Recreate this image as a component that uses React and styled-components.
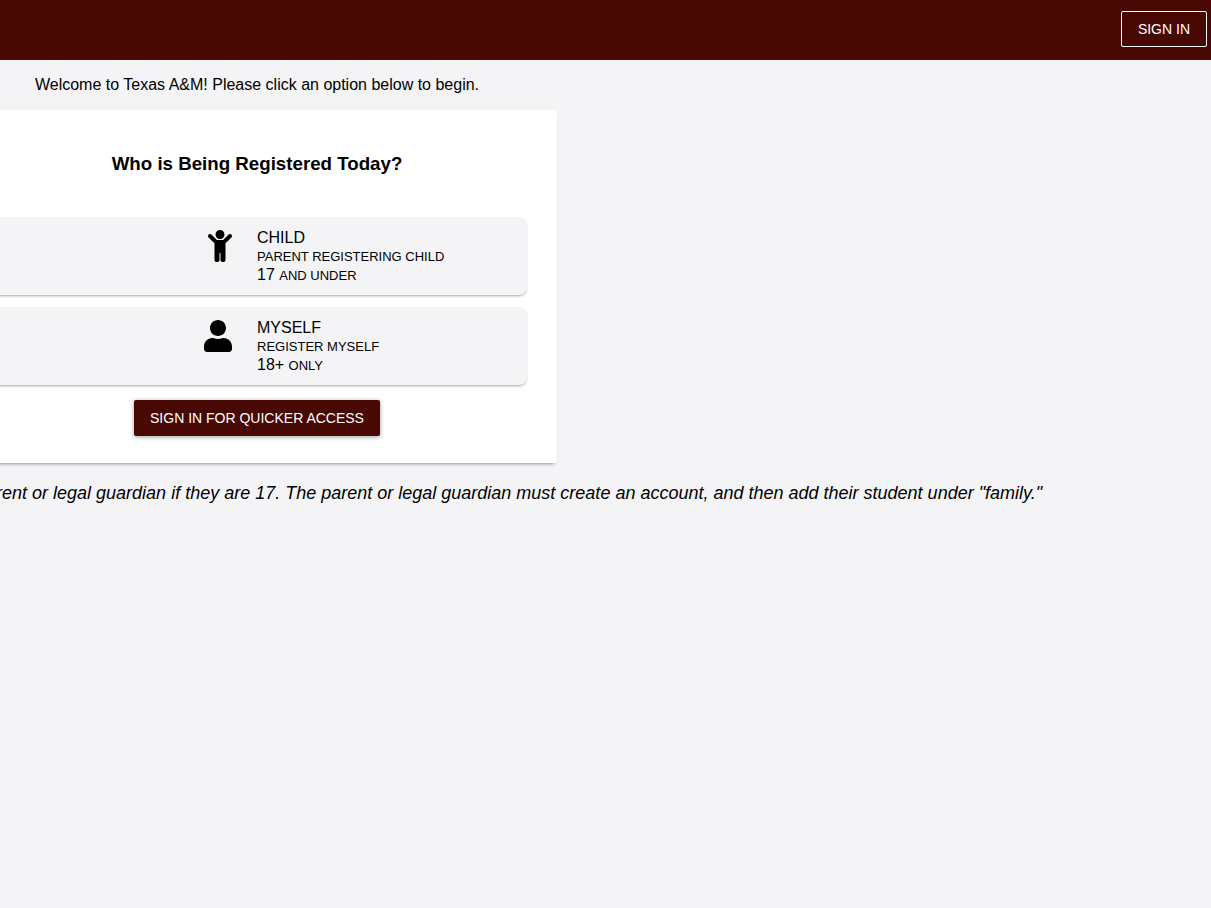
import React from "react";
import styled, { createGlobalStyle } from "styled-components";
import { FaChild, FaUser } from "react-icons/fa";

const maroon = "#480804";
const mist = "#f4f4f7";

const GlobalStyle = createGlobalStyle`
  * { box-sizing: border-box; }
  body {
    margin: 0;
    background: ${mist};
    color: #000;
    font-family: "Liberation Sans", Arial, sans-serif;
    font-size: 16px;
    line-height: 18px;
    overflow-x: hidden;
  }
`;

const Header = styled.header`
  display: flex;
  justify-content: flex-end;
  padding: 11px 4px 13px;
  background: ${maroon};
`;

const Button = styled.button`
  height: 36px;
  padding: 0 16px;
  border: ${(p) => (p.$outlined ? "1px solid #fff" : "0")};
  border-radius: 2px;
  background: ${maroon};
  color: #fff;
  font: inherit;
  font-size: 14px;
  text-transform: uppercase;
  cursor: pointer;
  box-shadow: ${(p) =>
    p.$outlined ? "none" : "0 1px 4px rgba(0, 0, 0, 0.4)"};
`;

const Main = styled.main`
  overflow: hidden;
`;

const Column = styled.div`
  width: 600px;
  margin-left: -43px;
  text-align: center;
`;

const Welcome = styled.p`
  margin: 0;
  padding: 16px 0;
`;

const Card = styled.section`
  padding: 43px 30px 27px;
  border-radius: 3px;
  background: #fff;
  box-shadow: 0 3px 4px -3px rgba(0, 0, 0, 0.6);
`;

const Title = styled.h3`
  margin: 0 0 42px;
  line-height: 22px;
`;

const Options = styled.div`
  display: grid;
  gap: 12px;
  margin-bottom: 15px;
`;

const Option = styled.button`
  display: grid;
  grid-template-columns: 1fr 1fr;
  align-items: start;
  width: 100%;
  height: 78px;
  padding: 12px 0;
  border: 0;
  border-radius: 8px;
  background: ${mist};
  color: inherit;
  font: inherit;
  text-align: left;
  cursor: pointer;
  box-shadow: 0 2px 3px -1px rgba(0, 0, 0, 0.35);
`;

const IconCell = styled.span`
  display: flex;
  justify-content: flex-end;
  padding: 1px 25px 0 0;

  svg {
    width: ${(p) => p.$width}px;
    height: 32px;
  }
`;

const Line = styled.span`
  display: block;
`;

const Small = styled.span`
  font-size: 13px;
`;

const Note = styled.p`
  margin: 20px 0 0 -24px;
  font-size: 18px;
  line-height: 20px;
  font-style: italic;
  white-space: nowrap;
`;

export default function App() {
  return (
    <>
      <GlobalStyle />
      <Header>
        <Button type="button" $outlined>Sign In</Button>
      </Header>
      <Main>
        <Column>
          <Welcome>
            Welcome to Texas A&amp;M! Please click an option below to begin.
          </Welcome>
          <Card>
            <Title>Who is Being Registered Today?</Title>
            <Options>
              <Option type="button">
                <IconCell $width={24}><FaChild aria-hidden="true" /></IconCell>
                <span>
                  <Line>CHILD</Line>
                  <Line><Small>PARENT REGISTERING CHILD</Small></Line>
                  <Line>17 <Small>AND UNDER</Small></Line>
                </span>
              </Option>
              <Option type="button">
                <IconCell $width={28}><FaUser aria-hidden="true" /></IconCell>
                <span>
                  <Line>MYSELF</Line>
                  <Line><Small>REGISTER MYSELF</Small></Line>
                  <Line>18+ <Small>ONLY</Small></Line>
                </span>
              </Option>
            </Options>
            <Button type="button">Sign In for Quicker Access</Button>
          </Card>
        </Column>
        <Note>
          parent or legal guardian if they are 17. The parent or legal guardian
          must create an account, and then add their student under "family."
        </Note>
      </Main>
    </>
  );
}
